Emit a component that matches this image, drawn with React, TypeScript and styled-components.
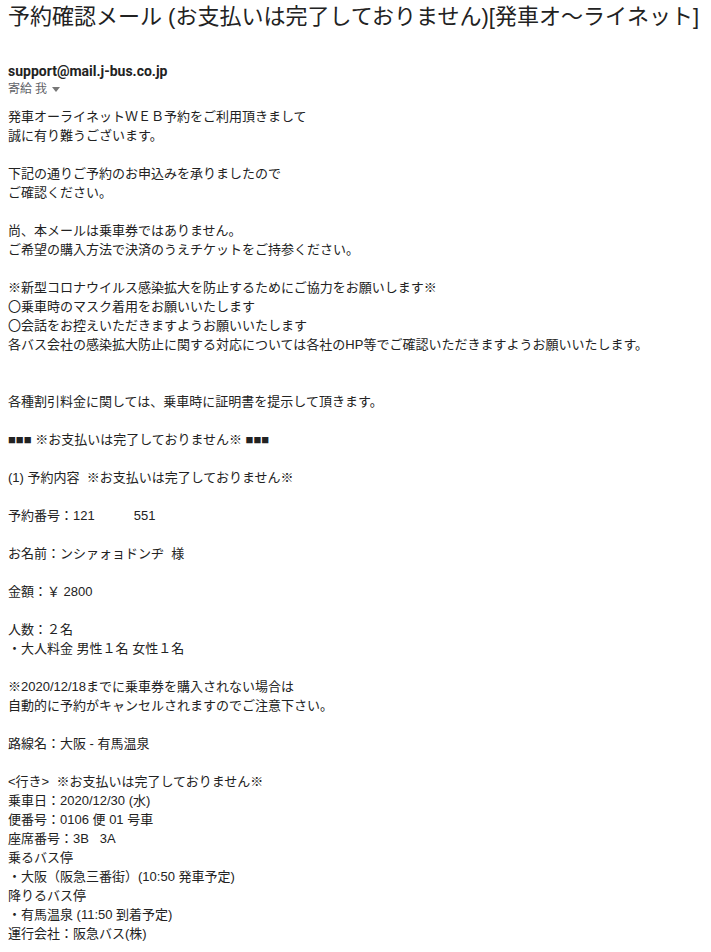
import { FC } from 'react';
import styled, { createGlobalStyle } from 'styled-components';

const GlobalStyle = createGlobalStyle`
  html, body {
    margin: 0;
    padding: 0;
    background: #fff;
  }
  body {
    font-family: "Liberation Sans", "Noto Sans CJK JP", sans-serif;
    color: #222;
  }
`;

type Block = { lines: string[]; gap?: number };

const blocks: Block[] = [
  { lines: ['発車オーライネットＷＥＢ予約をご利用頂きまして', '誠に有り難うございます。'], gap: 0 },
  { lines: ['下記の通りご予約のお申込みを承りましたので', 'ご確認ください。'] },
  { lines: ['尚、本メールは乗車券ではありません。', 'ご希望の購入方法で決済のうえチケットをご持参ください。'] },
  {
    lines: [
      '※新型コロナウイルス感染拡大を防止するためにご協力をお願いします※',
      '〇乗車時のマスク着用をお願いいたします',
      '〇会話をお控えいただきますようお願いいたします',
      '各バス会社の感染拡大防止に関する対応については各社のHP等でご確認いただきますようお願いいたします。',
    ],
  },
  { lines: ['各種割引料金に関しては、乗車時に証明書を提示して頂きます。'], gap: 2 },
  { lines: ['■■■ ※お支払いは完了しておりません※ ■■■'] },
  { lines: ['(1) 予約内容  ※お支払いは完了しておりません※'] },
  { lines: ['予約番号：121　　　551'] },
  { lines: ['お名前：ンシァォョドンヂ  様'] },
  { lines: ['金額：￥ 2800'] },
  { lines: ['人数：２名', '・大人料金 男性１名 女性１名'] },
  { lines: ['※2020/12/18までに乗車券を購入されない場合は', '自動的に予約がキャンセルされますのでご注意下さい。'] },
  { lines: ['路線名：大阪 - 有馬温泉'] },
  {
    lines: [
      '<行き>  ※お支払いは完了しておりません※',
      '乗車日：2020/12/30 (水)',
      '便番号：0106 便 01 号車',
      '座席番号：3B   3A',
      '乗るバス停',
      '・大阪（阪急三番街）(10:50 発車予定)',
      '降りるバス停',
      '・有馬温泉 (11:50 到着予定)',
      '運行会社：阪急バス(株)',
    ],
  },
];

const App: FC = () => {
  return (
    <>
      <GlobalStyle />
      <PageSC>
        <SubjectSC>予約確認メール (お支払いは完了しておりません)[発車オ～ライネット]</SubjectSC>
        <SenderSC>support@mail.j-bus.co.jp</SenderSC>
        <RecipientSC>
          寄給 我
          <svg width="8" height="5" viewBox="0 0 8 5">
            <path d="M0 0 L8 0 L4 5 Z" fill="#777" />
          </svg>
        </RecipientSC>
        <BodySC>
          {blocks.map((b, i) => (
            <ParagraphSC key={i} gap={b.gap ?? 1}>
              {b.lines.map((l, j) => (
                <LineSC key={j}>{l}</LineSC>
              ))}
            </ParagraphSC>
          ))}
        </BodySC>
      </PageSC>
    </>
  );
};

export default App;

const PageSC = styled('div')`
  padding: 0 8px;
  display: flex;
  flex-direction: column;
`;

const SubjectSC = styled('h1')`
  margin: 0;
  font-size: 22px;
  font-weight: 400;
  line-height: 34px;
  color: #222;
  white-space: nowrap;
`;

const SenderSC = styled('div')`
  margin-top: 28px;
  font-family: Roboto, "Liberation Sans", sans-serif;
  font-weight: 700;
  font-size: 14px;
  line-height: 18px;
  color: #222;
`;

const RecipientSC = styled('div')`
  display: flex;
  align-items: center;
  gap: 5px;
  font-family: Roboto, "Noto Sans CJK TC", sans-serif;
  font-size: 12px;
  line-height: 18px;
  color: #5f6368;
`;

const BodySC = styled('div')`
  margin-top: 9px;
  font-size: 13px;
  line-height: 19px;
  color: #222;
`;

const ParagraphSC = styled('div')<{ gap: number }>`
  margin-top: ${p => p.gap * 19}px;
  display: flex;
  flex-direction: column;
`;

const LineSC = styled('div')`
  white-space: pre;
`;
